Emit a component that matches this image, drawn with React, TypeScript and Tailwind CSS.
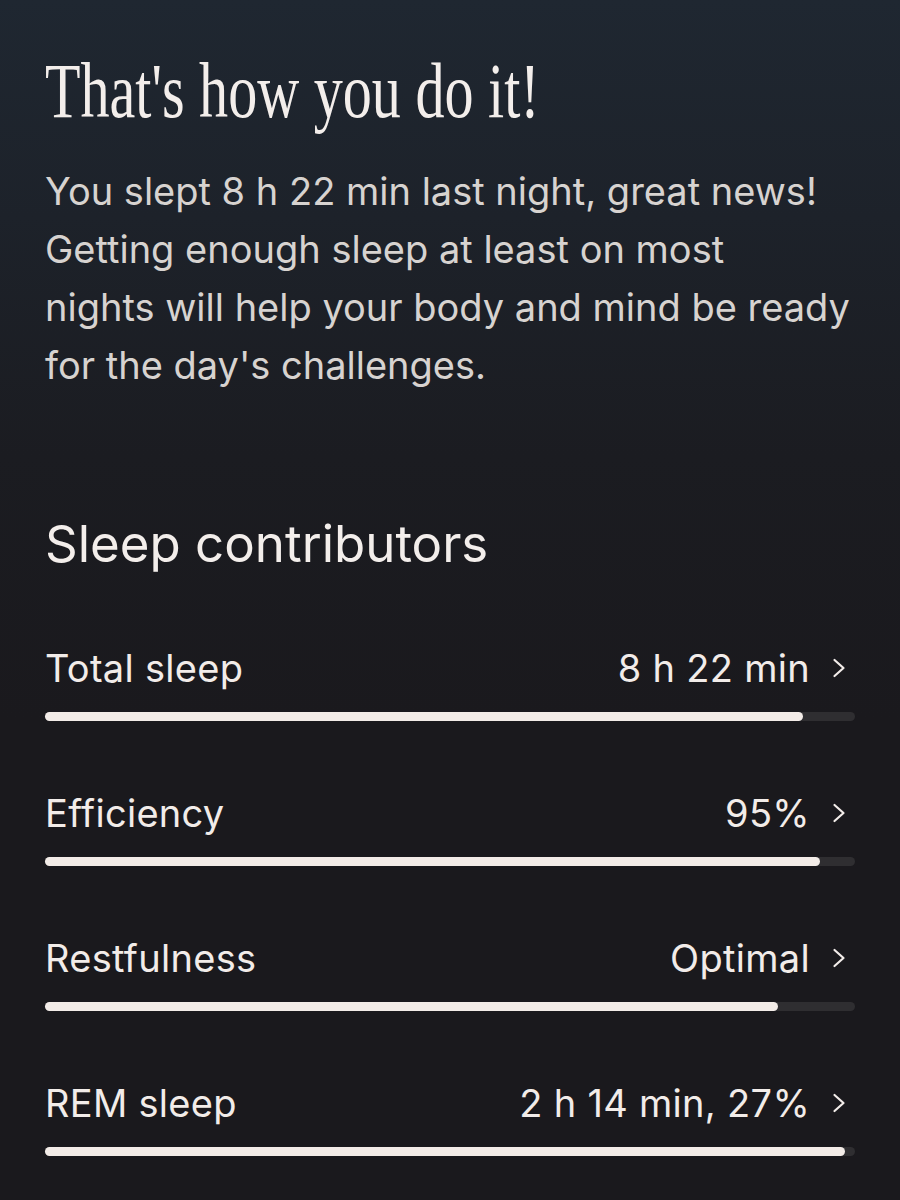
import React from 'react'

const contributors = [
  { label: 'Total sleep', value: '8 h 22 min', fill: 93.6 },
  { label: 'Efficiency', value: '95%', fill: 95.7 },
  { label: 'Restfulness', value: 'Optimal', fill: 90.5 },
  { label: 'REM sleep', value: '2 h 14 min, 27%', fill: 98.8 },
]

function Chevron() {
  return (
    <svg width="14" height="20" viewBox="0 0 14 20" fill="none" className="shrink-0">
      <polyline points="2.5,2 11.5,10 2.5,18" stroke="#f2ece9" strokeWidth="2.2" strokeLinecap="round" strokeLinejoin="round" />
    </svg>
  )
}

export default function App() {
  return (
    <div className="w-[900px] h-[1200px] overflow-hidden bg-[linear-gradient(180deg,#1f2731_0%,#1d222a_18%,#1b1c21_38%,#1a191d_60%,#1a191d_100%)] px-[45px] pt-[52px] font-['Inter','Liberation_Sans',sans-serif]">
      {/* Headline */}
      <h1 className="origin-left scale-x-[0.745] whitespace-nowrap font-['Liberation_Serif',serif] text-[78px] leading-[78px] text-[#f3eeeb]">
        That's how you do it!
      </h1>

      <p className="mt-[32px] text-[38px] leading-[58px] text-[#d7d3d0]">
        You slept 8 h 22 min last night, great news!
        <br />
        Getting enough sleep at least on most
        <br />
        nights will help your body and mind be ready
        <br />
        for the day's challenges.
      </p>

      <h2 className="mt-[124px] text-[51px] leading-[52px] text-[#f3eeeb]">Sleep contributors</h2>

      {/* Contributors */}
      <div className="mt-[75px] flex flex-col gap-[69px]">
        {contributors.map((c) => (
          <div key={c.label} className="flex flex-col gap-[21px]">
            <div className="flex items-center justify-between pr-[9px] text-[38px] leading-[46px] tracking-[0.3px] text-[#f2ece9]">
              <span>{c.label}</span>
              <span className="flex items-center gap-[22px]">
                {c.value}
                <Chevron />
              </span>
            </div>
            <div className="h-[9px] w-full rounded-full bg-[#2f2e31]">
              <div className="h-full rounded-full bg-[#f3ece8]" style={{ width: `${c.fill}%` }} />
            </div>
          </div>
        ))}
      </div>
    </div>
  )
}
